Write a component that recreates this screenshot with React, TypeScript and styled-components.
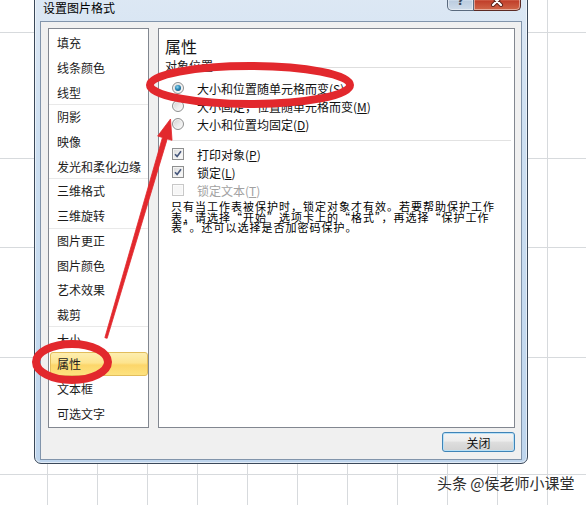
import React from "react";
import styled, { createGlobalStyle } from "styled-components";

const GlobalStyle = createGlobalStyle`
  html, body { margin: 0; padding: 0; background: #fff; }
  body { font-family: "Noto Sans CJK SC", "Noto Sans", sans-serif; }
`;

const GRID = "#d7dadd";
const hLines = [32, 158, 247, 357, 474];
const gridBg = [
  ...hLines.map((y) => `linear-gradient(${GRID}, ${GRID}) 0 ${y}px / 100% 1px no-repeat`),
  `repeating-linear-gradient(to right, transparent 0 47px, ${GRID} 47px 48px, transparent 48px 50px)`,
  "#ffffff",
].join(", ");

const Page = styled.div`
  position: relative;
  width: 586px;
  height: 505px;
  overflow: hidden;
  background: ${gridBg};
  font-family: "Noto Sans CJK SC", "Noto Sans", sans-serif;
  color: #111;
`;

const Frame = styled.div`
  width: 494px;
  height: 473px;
  box-sizing: border-box;
  margin: -9px 0 0 34px;
  border: 1px solid #3a4859;
  border-radius: 7px;
  background: linear-gradient(to bottom, #dde8f4 0%, #cddff1 30%, #bed5ed 100%);
  box-shadow: inset 0 0 0 1px rgba(255, 255, 255, 0.55);
  padding: 0 5px 3px 5px;
  display: flex;
  flex-direction: column;
`;

const TitleBar = styled.div`
  height: 29px;
  flex: none;
  display: flex;
  justify-content: space-between;
  align-items: flex-start;
  padding: 0 1px 0 3px;
`;

const TitleText = styled.div`
  margin-top: 9px;
  font-size: 12px;
  line-height: 14px;
  color: #000;
`;

const Controls = styled.div`
  display: flex;
  margin-top: -1px;
`;

const CaptionButton = styled.div<{ $kind: "help" | "close" }>`
  height: 20px;
  width: ${(p) => (p.$kind === "close" ? "47px" : "27px")};
  box-sizing: border-box;
  border: 1px solid ${(p) => (p.$kind === "close" ? "#5c2a24" : "#5a6a7e")};
  border-top: none;
  border-left: ${(p) => (p.$kind === "close" ? "none" : "1px solid #5a6a7e")};
  border-radius: ${(p) => (p.$kind === "close" ? "0 0 5px 0" : "0 0 0 5px")};
  background: ${(p) =>
    p.$kind === "close"
      ? "linear-gradient(to bottom, #e9a99b 0%, #d46a55 45%, #c2412c 55%, #d0674a 100%)"
      : "linear-gradient(to bottom, #eef3f9 0%, #d6e2ef 45%, #bccde0 55%, #cfdcea 100%)"};
  box-shadow: inset 0 0 0 1px rgba(255, 255, 255, 0.45);
  display: flex;
  align-items: center;
  justify-content: center;
  color: #3e4a5a;
  font-family: "DejaVu Sans", sans-serif;
  font-weight: bold;
  font-size: 12px;
`;

const Client = styled.div`
  flex: 1;
  border: 1px solid #8194ab;
  background: #f0f0f0;
  padding: 6px 6px 6px 7px;
  display: flex;
  flex-direction: column;
`;

const BodyRow = styled.div`
  height: 400px;
  display: flex;
  gap: 9px;
`;

const NavList = styled.div`
  width: 101px;
  flex: none;
  box-sizing: border-box;
  border: 1px solid #828790;
  background: #fff;
  padding-top: 1px;
`;

const NavItem = styled.div<{ $groupStart?: boolean }>`
  height: 24.7px;
  box-sizing: border-box;
  border-top: 1px solid ${(p) => (p.$groupStart ? "#e9e9e9" : "transparent")};
  padding: 0 0 0 1px;
  display: flex;
  align-items: stretch;
`;

const NavLabel = styled.div<{ $selected?: boolean }>`
  flex: 1;
  padding-left: 6px;
  display: flex;
  align-items: center;
  font-size: 12px;
  color: #1c1c1c;
  border-radius: 3px;
  box-sizing: border-box;
  border: 1px solid ${(p) => (p.$selected ? "#e2bd5c" : "transparent")};
  background: ${(p) =>
    p.$selected
      ? "linear-gradient(to bottom, #fdeeb0 0%, #fde48e 45%, #fcd66a 55%, #fde27f 100%)"
      : "transparent"};
`;

const Panel = styled.div`
  flex: 1;
  box-sizing: border-box;
  border: 1px solid #828790;
  background: #fff;
  padding: 7px 3px 0 6px;
  display: flex;
  flex-direction: column;
`;

const Heading = styled.div`
  font-size: 16px;
  line-height: 20px;
  color: #151515;
`;

const GroupHeader = styled.div`
  margin-top: 2px;
  display: flex;
  align-items: center;
  gap: 4px;
  font-size: 12px;
  line-height: 16px;
  color: #1a1a1a;
  &::after {
    content: "";
    flex: 1;
    height: 1px;
    background: #dedede;
    margin-top: 2px;
  }
`;

const OptionList = styled.div<{ $top: number }>`
  margin-top: ${(p) => p.$top}px;
  display: flex;
  flex-direction: column;
`;

const OptionRow = styled.div<{ $indent: number; $disabled?: boolean }>`
  height: 18px;
  display: flex;
  align-items: center;
  gap: ${(p) => 20 - p.$indent}px;
  padding-left: ${(p) => p.$indent}px;
  font-size: 12px;
  color: ${(p) => (p.$disabled ? "#a2a2a2" : "#111")};
  white-space: nowrap;
`;

const RadioDot = styled.span<{ $checked?: boolean }>`
  width: 12px;
  height: 12px;
  flex: none;
  box-sizing: border-box;
  border-radius: 50%;
  border: 1px solid #8e8f8f;
  background: linear-gradient(135deg, #cfcfcf 0%, #ececec 55%, #fbfbfb 100%);
  box-shadow: inset 0 0 0 1px #f6f6f6;
  display: flex;
  align-items: center;
  justify-content: center;
  &::after {
    content: "";
    width: 6px;
    height: 6px;
    border-radius: 50%;
    background: ${(p) =>
      p.$checked
        ? "radial-gradient(circle at 40% 35%, #8fd9f4 0%, #2a86b4 45%, #0c4266 100%)"
        : "transparent"};
  }
`;

const CheckBox = styled.span<{ $disabled?: boolean }>`
  width: 12px;
  height: 12px;
  flex: none;
  box-sizing: border-box;
  border: 1px solid ${(p) => (p.$disabled ? "#c8c8c8" : "#8e8f8f")};
  background: ${(p) =>
    p.$disabled ? "#f6f6f6" : "linear-gradient(135deg, #d6d6d6 0%, #efefef 55%, #fdfdfd 100%)"};
  box-shadow: inset 0 0 0 1px ${(p) => (p.$disabled ? "#fbfbfb" : "#f3f3f3")};
  display: flex;
  align-items: center;
  justify-content: center;
`;

const Separator = styled.div`
  height: 1px;
  background: #e2e2e2;
  margin: 7px 0 4px 3px;
`;

const Note = styled.div`
  margin-top: 2px;
  padding-left: 6px;
  font-size: 11px;
  letter-spacing: 1px;
  line-height: 10.7px;
  color: #000;
`;

const NoteLine = styled.div`
  white-space: nowrap;
`;

const Footer = styled.div`
  margin-top: 4px;
  display: flex;
  justify-content: flex-end;
`;

const PushButton = styled.div`
  width: 73px;
  height: 20px;
  box-sizing: border-box;
  border: 1px solid #3f84b7;
  border-radius: 3px;
  background: linear-gradient(to bottom, #f4f4f4 0%, #ececec 45%, #dedede 50%, #d2d2d2 100%);
  box-shadow: inset 0 0 0 1px #b9e0f6;
  display: flex;
  align-items: center;
  justify-content: center;
  font-size: 12px;
  color: #111;
`;

const Annotations = styled.svg`
  position: absolute;
  left: 0;
  top: 0;
  pointer-events: none;
`;

const Watermark = styled.div`
  position: absolute;
  left: 437px;
  top: 474px;
  font-size: 15px;
  line-height: 18px;
  color: #2e2e2e;
  white-space: nowrap;
  text-shadow: 0 0 2px #fff;
`;

const navItems: { label: string; groupStart?: boolean; selected?: boolean }[] = [
  { label: "填充" },
  { label: "线条颜色" },
  { label: "线型" },
  { label: "阴影", groupStart: true },
  { label: "映像" },
  { label: "发光和柔化边缘" },
  { label: "三维格式", groupStart: true },
  { label: "三维旋转" },
  { label: "图片更正", groupStart: true },
  { label: "图片颜色" },
  { label: "艺术效果" },
  { label: "裁剪" },
  { label: "大小", groupStart: true },
  { label: "属性", selected: true },
  { label: "文本框" },
  { label: "可选文字" },
];

const radios = [
  { text: "大小和位置随单元格而变", key: "S", checked: true },
  { text: "大小固定，位置随单元格而变", key: "M" },
  { text: "大小和位置均固定", key: "D" },
];

const checks = [
  { text: "打印对象", key: "P" },
  { text: "锁定", key: "L" },
  { text: "锁定文本", key: "T", disabled: true },
];

const Label: React.FC<{ text: string; k: string }> = ({ text, k }) => (
  <span>
    {text}(<u>{k}</u>)
  </span>
);

const CheckMark: React.FC<{ show: boolean }> = ({ show }) =>
  show ? (
    <svg width="8" height="8" viewBox="0 0 8 8">
      <path d="M1 4.2 L3.1 6.4 L7 1.2" fill="none" stroke="#46577c" strokeWidth="1.6" />
    </svg>
  ) : null;

// arrow geometry
const B = [106, 338];
const T = [170.5, 119];
const len = Math.hypot(T[0] - B[0], T[1] - B[1]);
const d = [(T[0] - B[0]) / len, (T[1] - B[1]) / len];
const n = [-d[1], d[0]];
const H = [T[0] - 20 * d[0], T[1] - 20 * d[1]];
const pt = (p: number[], w: number) => `${(p[0] + w * n[0]).toFixed(2)},${(p[1] + w * n[1]).toFixed(2)}`;
const arrowPoints = [
  pt(B, -1.2),
  pt(H, -2.5),
  pt(H, -7.5),
  `${T[0]},${T[1]}`,
  pt(H, 7.5),
  pt(H, 2.5),
  pt(B, 1.2),
].join(" ");

const RED = "#e2282d";

export default function App() {
  return (
    <>
      <GlobalStyle />
      <Page>
        <Frame>
          <TitleBar>
            <TitleText>设置图片格式</TitleText>
            <Controls>
              <CaptionButton $kind="help">?</CaptionButton>
              <CaptionButton $kind="close">
                <svg width="14" height="12" viewBox="0 0 14 12">
                  <path d="M3 2 L11 10 M11 2 L3 10" stroke="#5a2018" strokeWidth="4" strokeLinecap="round" />
                  <path d="M3 2 L11 10 M11 2 L3 10" stroke="#ffffff" strokeWidth="2.2" strokeLinecap="round" />
                </svg>
              </CaptionButton>
            </Controls>
          </TitleBar>
          <Client>
            <BodyRow>
              <NavList>
                {navItems.map((it) => (
                  <NavItem key={it.label} $groupStart={it.groupStart}>
                    <NavLabel $selected={it.selected}>{it.label}</NavLabel>
                  </NavItem>
                ))}
              </NavList>
              <Panel>
                <Heading>属性</Heading>
                <GroupHeader>对象位置</GroupHeader>
                <OptionList $top={5}>
                  {radios.map((r) => (
                    <OptionRow key={r.key} $indent={7}>
                      <RadioDot $checked={r.checked} />
                      <Label text={r.text} k={r.key} />
                    </OptionRow>
                  ))}
                </OptionList>
                <Separator />
                <OptionList $top={0}>
                  {checks.map((c) => (
                    <OptionRow key={c.key} $indent={7} $disabled={c.disabled}>
                      <CheckBox $disabled={c.disabled}>
                        <CheckMark show={!c.disabled} />
                      </CheckBox>
                      <Label text={c.text} k={c.key} />
                    </OptionRow>
                  ))}
                </OptionList>
                <Note>
                  <NoteLine>只有当工作表被保护时，锁定对象才有效。若要帮助保护工作</NoteLine>
                  <NoteLine>表，请选择“开始”选项卡上的“格式”，再选择“保护工作</NoteLine>
                  <NoteLine>表”。还可以选择是否加密码保护。</NoteLine>
                </Note>
              </Panel>
            </BodyRow>
            <Footer>
              <PushButton>关闭</PushButton>
            </Footer>
          </Client>
        </Frame>
        <Annotations width="586" height="505" viewBox="0 0 586 505">
          <ellipse cx="250" cy="85" rx="100" ry="19" fill="none" stroke={RED} strokeWidth="8" />
          <ellipse cx="72" cy="362" rx="36" ry="18" fill="none" stroke={RED} strokeWidth="8" />
          <polygon points={arrowPoints} fill={RED} stroke={RED} strokeWidth="0.8" strokeLinejoin="round" />
        </Annotations>
        <Watermark>头条 @侯老师小课堂</Watermark>
      </Page>
    </>
  );
}
